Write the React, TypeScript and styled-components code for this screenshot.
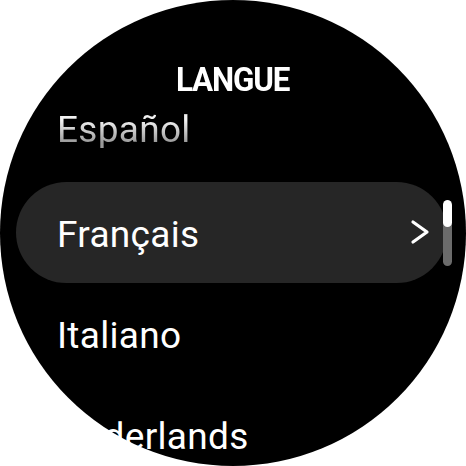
import React from "react";
import styled, { createGlobalStyle } from "styled-components";

const GlobalStyle = createGlobalStyle`
  html, body {
    margin: 0;
    padding: 0;
    background: #ffffff;
    overflow: hidden;
  }
  * {
    box-sizing: border-box;
  }
`;

const Watch = styled.div`
  position: relative;
  width: 466px;
  height: 466px;
  border-radius: 50%;
  background: #000000;
  display: flex;
  flex-direction: column;
  font-family: Roboto, "Liberation Sans", sans-serif;
  color: #ffffff;
`;

const Header = styled.div`
  height: 81px;
  padding-top: 63px;
  display: flex;
  justify-content: center;
`;

const Title = styled.div`
  font-size: 33px;
  line-height: 33px;
  font-weight: 700;
  letter-spacing: -1.2px;
  transform: scaleX(0.95);
`;

const List = styled.div`
  display: flex;
  flex-direction: column;
  padding: 0 19px 0 16px;
`;

const Row = styled.div<{ $active?: boolean }>`
  flex: none;
  height: 101px;
  padding: 4px 17px 0 41px;
  display: flex;
  align-items: center;
  justify-content: space-between;
  border-radius: 51px;
  background: ${(p) => (p.$active ? "#262626" : "transparent")};
`;

const Label = styled.span<{ $faded?: boolean }>`
  font-size: 37px;
  line-height: 37px;
  font-weight: 400;
  letter-spacing: 0.3px;
  white-space: nowrap;
  ${(p) =>
    p.$faded &&
    `
    margin-top: -8px;
    background: linear-gradient(180deg, #f2f2f2 25%, #9a9a9a 85%);
    -webkit-background-clip: text;
    background-clip: text;
    color: transparent;
  `}
`;

const Chevron = styled.svg`
  width: 20px;
  height: 26px;
  margin-top: -6px;
`;

const ScrollTrack = styled.div`
  position: absolute;
  left: 443px;
  top: 200px;
  width: 9px;
  height: 66px;
  border-radius: 5px;
  background: #6b6b6b;
  overflow: hidden;
`;

const ScrollThumb = styled.div`
  height: 27px;
  border-radius: 5px;
  background: #ffffff;
`;

const languages = [
  { name: "Español", faded: true },
  { name: "Français", active: true },
  { name: "Italiano" },
  { name: "Nederlands" },
];

export default function App() {
  return (
    <>
      <GlobalStyle />
      <Watch>
        <Header>
          <Title>LANGUE</Title>
        </Header>
        <List>
          {languages.map((lang) => (
            <Row key={lang.name} $active={lang.active}>
              <Label $faded={lang.faded}>{lang.name}</Label>
              {lang.active && (
                <Chevron viewBox="0 0 20 26">
                  <path
                    d="M3 3 L17 13 L3 23"
                    fill="none"
                    stroke="#ffffff"
                    strokeWidth="3.2"
                    strokeLinecap="round"
                    strokeLinejoin="round"
                  />
                </Chevron>
              )}
            </Row>
          ))}
        </List>
        <ScrollTrack>
          <ScrollThumb />
        </ScrollTrack>
      </Watch>
    </>
  );
}
